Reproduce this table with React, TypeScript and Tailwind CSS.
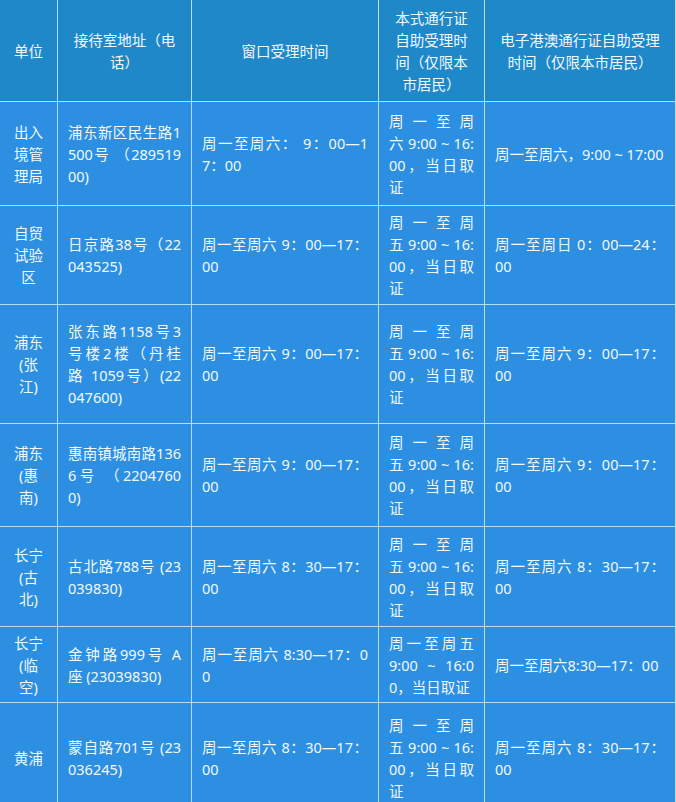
import React from "react";

type Align = "c" | "j";
type CellDef = { lines: string[]; align: Align };

const header: CellDef[] = [
  { lines: ["单位"], align: "c" },
  { lines: ["接待室地址（电", "话）"], align: "c" },
  { lines: ["窗口受理时间"], align: "c" },
  { lines: ["本式通行证", "自助受理时", "间（仅限本", "市居民）"], align: "c" },
  { lines: ["电子港澳通行证自助受理", "时间（仅限本市居民）"], align: "c" },
];

const c4 = ["周一至周", "五 9:00 ~ 16:", "00，当日取", "证"];

const rows: CellDef[][] = [
  [
    { lines: ["出入", "境管", "理局"], align: "c" },
    { lines: ["浦东新区民生路1", "500号 （289519", "00)"], align: "j" },
    { lines: ["周一至周六：  9：00—1", "7：00"], align: "j" },
    { lines: ["周一至周", "六 9:00 ~ 16:", "00，当日取", "证"], align: "j" },
    { lines: ["周一至周六，9:00 ~ 17:00"], align: "j" },
  ],
  [
    { lines: ["自贸", "试验", "区"], align: "c" },
    { lines: ["日京路38号（22", "043525)"], align: "j" },
    { lines: ["周一至周六 9：00—17：", "00"], align: "j" },
    { lines: c4, align: "j" },
    { lines: ["周一至周日 0：00—24：", "00"], align: "j" },
  ],
  [
    { lines: ["浦东", "(张", "江)"], align: "c" },
    { lines: ["张东路1158号3", "号楼2楼（丹桂", "路 1059号）(22", "047600)"], align: "j" },
    { lines: ["周一至周六 9：00—17：", "00"], align: "j" },
    { lines: c4, align: "j" },
    { lines: ["周一至周六 9：00—17：", "00"], align: "j" },
  ],
  [
    { lines: ["浦东", "(惠", "南)"], align: "c" },
    { lines: ["惠南镇城南路136", "6号 （2204760", "0)"], align: "j" },
    { lines: ["周一至周六 9：00—17：", "00"], align: "j" },
    { lines: c4, align: "j" },
    { lines: ["周一至周六 9：00—17：", "00"], align: "j" },
  ],
  [
    { lines: ["长宁", "(古", "北)"], align: "c" },
    { lines: ["古北路788号 (23", "039830)"], align: "j" },
    { lines: ["周一至周六 8：30—17：", "00"], align: "j" },
    { lines: c4, align: "j" },
    { lines: ["周一至周六 8：30—17：", "00"], align: "j" },
  ],
  [
    { lines: ["长宁", "(临", "空)"], align: "c" },
    { lines: ["金钟路999号 A", "座 (23039830)"], align: "j" },
    { lines: ["周一至周六 8:30—17：0", "0"], align: "j" },
    { lines: ["周一至周五", "9:00 ~ 16:0", "0，当日取证"], align: "j" },
    { lines: ["周一至周六8:30—17：00"], align: "j" },
  ],
  [
    { lines: ["黄浦"], align: "c" },
    { lines: ["蒙自路701号 (23", "036245)"], align: "j" },
    { lines: ["周一至周六 8：30—17：", "00"], align: "j" },
    { lines: c4, align: "j" },
    { lines: ["周一至周六 8：30—17：", "00"], align: "j" },
  ],
];

function Cell({ def, head }: { def: CellDef; head?: boolean }) {
  const bg = head ? "bg-[#1f88c9]" : "bg-[#2c8fe1]";
  return (
    <div className={`${bg} flex flex-col justify-center px-[10px] min-w-0`}>
      {def.lines.map((l, i) => {
        const last = i === def.lines.length - 1;
        let cls = "whitespace-nowrap";
        if (def.align === "c") cls += " text-center";
        else if (!last) cls += " text-justify [text-align-last:justify]";
        else cls += " text-left";
        return (
          <div key={i} className={cls}>
            {l}
          </div>
        );
      })}
    </div>
  );
}

export default function App() {
  return (
    <div
      className="w-[676px] h-[802px] overflow-hidden bg-[#b5def3] pr-px text-[#f2f9ff] text-[14.5px] leading-[22px]"
      style={{ fontFamily: '"Noto Sans", "Noto Sans CJK SC", sans-serif' }}
    >
      <div className="grid grid-cols-[57px_133px_186px_105px_190px] grid-rows-[101px_103px_98px_118px_102px_99px_75px_110px] gap-px">
        {header.map((d, i) => (
          <Cell key={`h${i}`} def={d} head />
        ))}
        {rows.map((r, ri) =>
          r.map((d, ci) => <Cell key={`${ri}-${ci}`} def={d} />)
        )}
      </div>
    </div>
  );
}
